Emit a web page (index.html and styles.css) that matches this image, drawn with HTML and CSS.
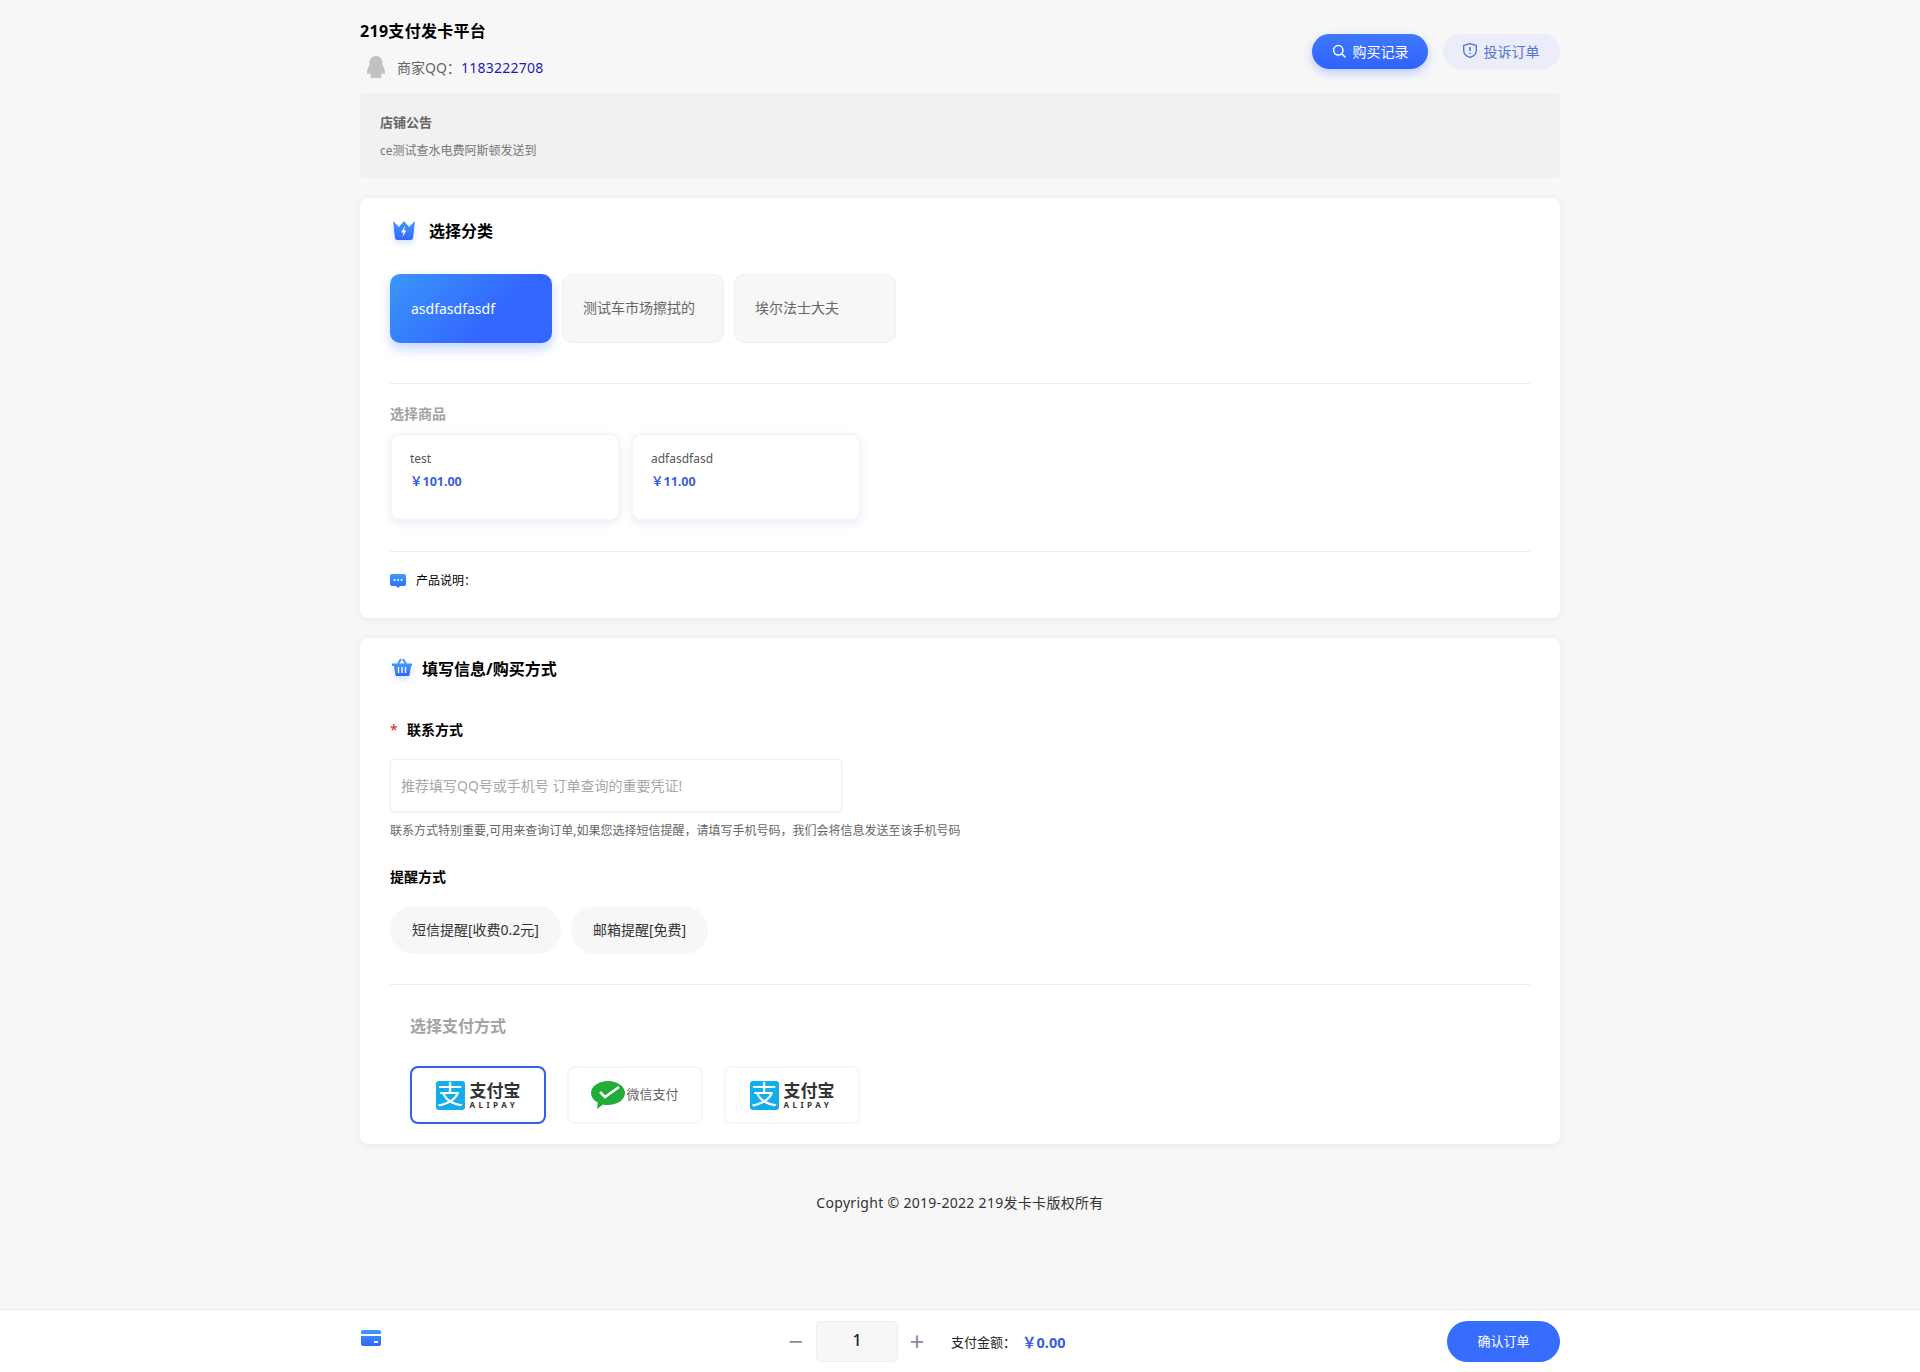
FILE: index.html
```html
<!DOCTYPE html>
<html lang="zh-CN">
<head>
    <meta charset="UTF-8">
    <title>219支付发卡平台</title>
    <link rel="stylesheet" href="styles.css">
</head>
<body>
    <svg class="defs" width="0" height="0">
        <defs>
            <linearGradient id="blue" x1="0" y1="0" x2="0" y2="1">
                <stop offset="0" stop-color="#3f9bfb"/>
                <stop offset="1" stop-color="#3366ff"/>
            </linearGradient>
        </defs>
    </svg>
    <div class="page">
        <header class="top">
            <div class="shop">
                <h1>219支付发卡平台</h1>
                <div class="qq">
                    <svg class="qq-icon" viewBox="0 0 20 24"><path fill="#c2c2c2" d="M10 1c-4 0-6.500 3-6.500 7v2C2 12 1 15 1 18c0 1 1 1.500 2.500 0 .5 1 1 2 2 2.500-1.500.5-1.500 2.500 1 2.500h7c2.500 0 2.500-2 1-2.500 1-.5 1.500-1.500 2-2.500 1.500 1.500 2.500 1 2.500 0 0-3-1-6-2.500-8V8c0-4-2.500-7-6.500-7z"/></svg>
                    <span class="qq-label">商家QQ：</span><span class="qq-num">1183222708</span>
                </div>
            </div>
            <div class="top-btns">
                <a class="btn btn-primary">
                    <svg class="btn-icon" viewBox="0 0 14 14" fill="none" stroke="#fff" stroke-width="1.500"><circle cx="6.300" cy="6.300" r="4.700"/><path d="M10 10l3 3" stroke-linecap="round"/></svg>
                    购买记录
                </a>
                <a class="btn btn-soft">
                    <svg class="btn-icon shield" viewBox="0 0 14 14" fill="none" stroke="#4a68d8" stroke-width="1.100"><path d="M7 1l5.500 1.500v4.500c0 3-2.500 5-5.500 6-3-1-5.500-3-5.500-6V2.500z"/><path d="M7 4v3.500M7 9v1" stroke-width="1.300"/></svg>
                    投诉订单
                </a>
            </div>
        </header>

        <section class="notice">
            <h4>店铺公告</h4>
            <p>ce测试查水电费阿斯顿发送到</p>
        </section>

        <section class="card card-goods">
            <div class="card-head head-cate">
                <svg class="head-icon" viewBox="0 0 24 20"><path fill="url(#blue)" d="M1 0l6 6 5-6 5 6 6-6-2 17c-.2 1-1 2-2 2H5c-1 0-1.800-1-2-2z"/><path fill="#fff" d="M13 5l-4 6.500h2.500l-1 4.500 4-6.500H12z"/></svg>
                <h3>选择分类</h3>
            </div>
            <div class="tabs">
                <div class="tab active">asdfasdfasdf</div>
                <div class="tab">测试车市场擦拭的</div>
                <div class="tab">埃尔法士大夫</div>
            </div>
            <div class="line line-cate"></div>
            <div class="sub-title">选择商品</div>
            <div class="goods">
                <div class="good">
                    <div class="good-name">test</div>
                    <div class="good-price">￥101.00</div>
                </div>
                <div class="good">
                    <div class="good-name">adfasdfasd</div>
                    <div class="good-price">￥11.00</div>
                </div>
            </div>
            <div class="line line-goods"></div>
            <div class="desc">
                <svg class="desc-icon" viewBox="0 0 16 14"><path fill="url(#blue)" d="M2 0h12a2 2 0 0 1 2 2v8a2 2 0 0 1-2 2h-4l-2 2-2-2H2a2 2 0 0 1-2-2V2a2 2 0 0 1 2-2z"/><circle cx="4.500" cy="6" r="1" fill="#fff"/><circle cx="8" cy="6" r="1" fill="#fff"/><circle cx="11.500" cy="6" r="1" fill="#fff"/></svg>
                <span>产品说明：</span>
            </div>
        </section>

        <section class="card card-form">
            <div class="card-head head-form">
                <svg class="head-icon basket" viewBox="0 2 20 20"><path fill="none" stroke="#3f8ffb" stroke-width="1.800" d="M6 7l3-5M14 7l-3-5"/><path fill="url(#blue)" d="M0 6.500h20V9h-1l-1.500 9c-.1.600-.6 1-1.200 1H4.700c-.6 0-1.100-.4-1.200-1L2 9H0z"/><path stroke="#fff" stroke-width="1.400" d="M6.500 10v6M10 10v6M13.500 10v6"/></svg>
                <h3>填写信息/购买方式</h3>
            </div>
            <div class="field-label"><i>*</i>联系方式</div>
            <input class="contact" type="text" placeholder="推荐填写QQ号或手机号 订单查询的重要凭证!">
            <p class="help">联系方式特别重要,可用来查询订单,如果您选择短信提醒，请填写手机号码，我们会将信息发送至该手机号码</p>
            <div class="notify-label">提醒方式</div>
            <div class="pills">
                <div class="pill">短信提醒[收费0.2元]</div>
                <div class="pill">邮箱提醒[免费]</div>
            </div>
            <div class="line line-form"></div>
            <div class="pay-title">选择支付方式</div>
            <div class="pays">
                <div class="pay active">
                    <span class="ali-mark">支</span>
                    <span class="ali-text"><b>支付宝</b><small>ALIPAY</small></span>
                </div>
                <div class="pay">
                    <svg class="wx-mark" viewBox="0 0 34 29"><path fill="#22ac38" d="M17 0c9 0 17 5 17 12s-8 12-17 12c-2 0-3.500-.2-5-.6L6 28l.8-6.500C3 19.500 0 16 0 12 0 5 8 0 17 0z"/><path fill="none" stroke="#fff" stroke-width="2.600" d="M9 11l5 5L28 6"/></svg>
                    <span class="wx-text">微信支付</span>
                </div>
                <div class="pay">
                    <span class="ali-mark">支</span>
                    <span class="ali-text"><b>支付宝</b><small>ALIPAY</small></span>
                </div>
            </div>
        </section>

        <footer class="copy">Copyright © 2019-2022 219发卡卡版权所有</footer>
    </div>

    <div class="bar">
        <div class="bar-inner">
            <svg class="bar-icon" viewBox="0 0 20 18"><path fill="url(#blue)" d="M2 0h16a2 2 0 0 1 2 2v2H0V2a2 2 0 0 1 2-2zM0 6h20v8a2 2 0 0 1-2 2H2a2 2 0 0 1-2-2z"/><rect x="13" y="11" width="4" height="2" fill="#fff"/></svg>
            <div class="order">
                <span class="step step-minus">−</span>
                <div class="qty">1</div>
                <span class="step step-plus">+</span>
                <span class="total-label">支付金额：</span>
                <span class="total">￥0.00</span>
            </div>
            <a class="confirm">确认订单</a>
        </div>
    </div>
</body>
</html>
```

FILE: styles.css
```css
* {
    box-sizing: border-box;
}
html, body {
    margin: 0;
    padding: 0;
}
body {
    min-height: 100vh;
    display: flex;
    flex-direction: column;
    background-color: #f7f7f7;
    color: #333;
    font-family: "Noto Sans", "Noto Sans CJK SC", sans-serif;
    font-size: 14px;
}
.defs {
    position: absolute;
}
.page {
    flex: 1;
    width: 1200px;
    margin: 0 auto;
}

/* header */
.top {
    height: 93px;
    display: flex;
    justify-content: space-between;
}
.shop h1 {
    margin: 20px 0 0;
    font-size: 16px;
    line-height: 22px;
    font-weight: 700;
    letter-spacing: .3px;
    color: #000;
}
.qq {
    display: flex;
    align-items: center;
    height: 24px;
    margin-top: 13px;
    padding-left: 6px;
}
.qq-icon {
    width: 20px;
    height: 24px;
    margin-right: 11px;
}
.qq-label {
    color: #666;
}
.qq-num {
    letter-spacing: .25px;
    color: #1a1ab8;
}
.top-btns {
    display: flex;
    gap: 15px;
    padding-top: 34px;
}
.btn {
    display: flex;
    align-items: center;
    justify-content: center;
    gap: 7px;
    height: 35px;
    padding-bottom: 2px;
    border-radius: 18px;
}
.btn-icon {
    width: 14px;
    height: 14px;
}
.shield {
    width: 16px;
    height: 17px;
}
.btn-primary {
    width: 116px;
    color: #fff;
    background: linear-gradient(180deg, #4079fb, #2f62fc);
    box-shadow: 0 4px 10px rgba(51, 102, 255, .3);
}
.btn-soft {
    width: 117px;
    gap: 6px;
    padding-right: 2px;
    color: #5570cf;
    background-color: #ebeefa;
}

/* notice */
.notice {
    height: 85px;
    padding: 20px 20px 0;
    background-color: #f1f1f1;
    border-radius: 6px;
}
.notice h4 {
    margin: 0;
    font-size: 13px;
    line-height: 18px;
    font-weight: 700;
    color: #666;
}
.notice p {
    margin: 11px 0 0;
    font-size: 12px;
    line-height: 18px;
    color: #777;
}

/* cards */
.card {
    margin-top: 20px;
    padding: 0 30px;
    background-color: #fff;
    border-radius: 8px;
    box-shadow: 0 2px 10px rgba(0, 0, 0, .06);
}
.card-goods {
    height: 420px;
}
.card-form {
    height: 506px;
}
.card-head {
    display: flex;
    align-items: center;
}
.card-head h3 {
    margin: 0;
    font-size: 16px;
    line-height: 24px;
    font-weight: 700;
    color: #000;
}
.head-cate {
    padding-top: 21px;
}
.head-form {
    padding-top: 19px;
}
.head-icon {
    width: 24px;
    height: 20px;
    margin: 0 13px 0 2px;
    filter: drop-shadow(0 3px 3px rgba(51, 102, 255, .2));
}
.basket {
    width: 20px;
    height: 22px;
    margin-right: 10px;
}
.line {
    height: 1px;
    background-color: #ececf0;
}

/* category tabs */
.tabs {
    display: flex;
    gap: 10px;
    margin-top: 31px;
}
.tab {
    width: 162px;
    height: 69px;
    padding-left: 20px;
    line-height: 66px;
    color: #666;
    background-color: #f7f7f7;
    border: 1px solid #f0f0f0;
    border-radius: 10px;
}
.tab.active {
    padding-left: 21px;
    line-height: 69px;
    color: #fff;
    border: 0;
    background: linear-gradient(135deg, #3a97fb, #3366ff 65%);
    box-shadow: 0 6px 12px rgba(58, 130, 251, .3);
}
.line-cate {
    margin-top: 40px;
}
.sub-title {
    margin-top: 20px;
    line-height: 20px;
    font-weight: 700;
    color: #a3a3a3;
}

/* goods */
.goods {
    display: flex;
    gap: 11px;
    margin-top: 9px;
}
.good {
    width: 230px;
    height: 88px;
    padding: 15px 18px 0;
    background-color: #fff;
    border: 2px solid #f5f6fb;
    border-radius: 10px;
    box-shadow: 0 3px 8px rgba(60, 80, 160, .1);
}
.good-name {
    font-size: 12px;
    line-height: 18px;
    color: #555;
}
.good-price {
    margin-top: 5px;
    font-size: 12.500px;
    line-height: 18px;
    font-weight: 700;
    color: #3b5fdc;
}
.line-goods {
    margin-top: 30px;
}
.desc {
    display: flex;
    align-items: center;
    margin-top: 20px;
    font-size: 12px;
    line-height: 18px;
    color: #000;
}
.desc-icon {
    width: 16px;
    height: 14px;
    margin-right: 10px;
}

/* contact form */
.field-label {
    position: relative;
    margin-top: 39px;
    padding-left: 17px;
    font-size: 14px;
    line-height: 20px;
    font-weight: 700;
    color: #000;
}
.field-label i {
    position: absolute;
    left: 0;
    top: 0;
    font-style: normal;
    font-weight: 400;
    color: #e02020;
}
.contact {
    display: block;
    width: 452px;
    height: 53px;
    margin-top: 19px;
    padding: 0 10px;
    font-family: inherit;
    font-size: 14px;
    background-color: #fff;
    border: 1px solid #efefef;
    border-radius: 4px;
    box-shadow: 0 1px 3px rgba(0, 0, 0, .05);
    outline: none;
}
.contact::placeholder {
    color: #a8a8a8;
}
.help {
    margin: 10px 0 0;
    font-size: 12px;
    line-height: 18px;
    color: #666;
}
.notify-label {
    margin-top: 27px;
    line-height: 20px;
    font-weight: 700;
    color: #000;
}
.pills {
    display: flex;
    gap: 10px;
    margin-top: 19px;
}
.pill {
    height: 48px;
    padding: 0 22px;
    line-height: 48px;
    color: #333;
    background-color: #f7f7f7;
    border-radius: 24px;
}
.line-form {
    margin-top: 30px;
}
.pay-title {
    margin: 29px 0 0 20px;
    font-size: 16px;
    line-height: 24px;
    font-weight: 700;
    color: #a3a3a3;
}

/* pay methods */
.pays {
    display: flex;
    gap: 21px;
    margin: 28px 0 0 20px;
}
.pay {
    display: flex;
    align-items: center;
    justify-content: center;
    width: 136px;
    height: 58px;
    background-color: #fff;
    border: 2px solid #f6f6f6;
    border-radius: 8px;
}
.pay.active {
    border-color: #3560e0;
}
.ali-mark {
    width: 29px;
    height: 29px;
    font-size: 26px;
    line-height: 27px;
    text-align: center;
    color: #fff;
    background-color: #12aee9;
    border-radius: 3px;
}
.ali-text {
    display: flex;
    flex-direction: column;
    margin-left: 5px;
    color: #333;
}
.ali-text b {
    font-size: 17px;
    line-height: 18px;
    white-space: nowrap;
}
.ali-text small {
    font-size: 8px;
    line-height: 9px;
    font-weight: 700;
    letter-spacing: 3.500px;
    white-space: nowrap;
}
.wx-mark {
    width: 34px;
    height: 29px;
}
.wx-text {
    margin-left: 1px;
    padding-bottom: 3px;
    font-size: 13px;
    color: #666;
}
.copy {
    margin-top: 49px;
    line-height: 20px;
    text-align: center;
    letter-spacing: .3px;
    color: #333;
}

/* bottom bar */
.bar {
    height: 63px;
    background-color: #fff;
    border-top: 1px solid #e9e9e9;
}
.bar-inner {
    display: flex;
    align-items: center;
    width: 1200px;
    height: 100%;
    margin: 0 auto;
}
.bar-icon {
    width: 20px;
    height: 18px;
    margin: -4px 0 0 1px;
}
.order {
    display: flex;
    align-items: center;
    margin-left: 405px;
}
.step {
    width: 20px;
    font-size: 26px;
    line-height: 22px;
    text-align: center;
    color: #888c99;
}
.step-minus {
    margin-right: 10px;
}
.step-plus {
    margin-left: 9px;
}
.qty {
    width: 82px;
    height: 41px;
    line-height: 37px;
    font-size: 16px;
    font-weight: 500;
    text-align: center;
    color: #222;
    background-color: #f7f7f7;
    border: 1px solid #efefef;
    border-radius: 5px;
}
.total-label {
    margin-left: 24px;
    font-size: 13px;
    color: #222;
}
.total {
    margin-left: 6px;
    font-size: 14.500px;
    font-weight: 700;
    color: #3b5fdc;
}
.confirm {
    width: 113px;
    height: 41px;
    margin-left: auto;
    font-size: 13px;
    line-height: 41px;
    text-align: center;
    color: #fff;
    background-color: #376dfd;
    border-radius: 21px;
}
```
